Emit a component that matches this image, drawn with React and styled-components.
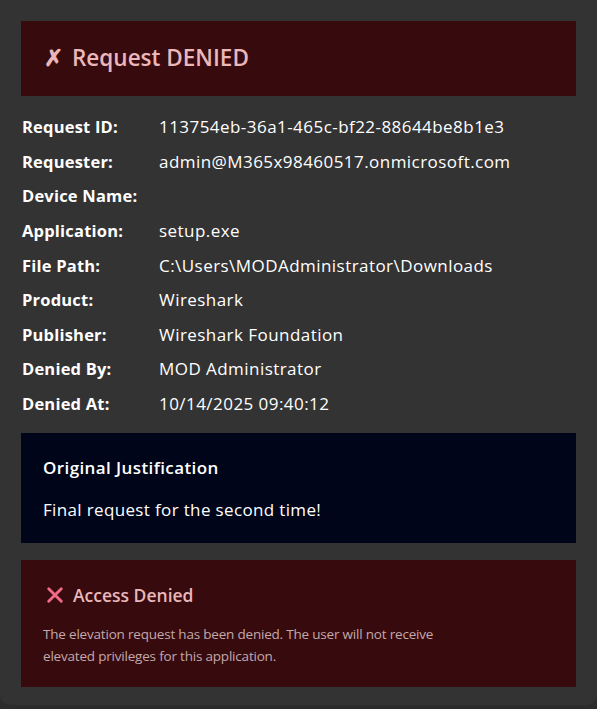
import React from 'react'
import styled, { createGlobalStyle } from 'styled-components'

const Global = createGlobalStyle`
  html, body { margin: 0; padding: 0; background: #2c2c2c; }
  body { font-family: "Open Sans", "Noto Sans", "Liberation Sans", sans-serif; }
`

const Page = styled.div`
  width: 597px;
  height: 705px;
  box-sizing: border-box;
  background: #333333;
  border-radius: 0 0 10px 10px;
  padding: 21px 21px 0 21px;
  display: flex;
  flex-direction: column;
`

const Banner = styled.div`
  background: #370a0e;
  height: 75px;
  box-sizing: border-box;
  padding: 0 23px;
  display: flex;
  align-items: center;
  gap: 9px;
  color: #eab7bb;
  font-size: 22.5px;
  font-weight: 600;
  line-height: 1;
`

const Details = styled.div`
  display: grid;
  grid-template-columns: 137px 1fr;
  grid-auto-rows: 34.6px;
  align-items: center;
  padding: 14px 1px 0;
  margin-bottom: 12px;
  color: #ffffff;
  line-height: 22px;
`

const Label = styled.div`
  font-weight: 700;
  font-size: 16.5px;
  letter-spacing: 0.2px;
`

const Value = styled.div`
  font-weight: 400;
  font-size: 17px;
  letter-spacing: 0.45px;
  white-space: nowrap;
`

const Panel = styled.div`
  background: ${p => p.$bg};
  padding: ${p => p.$pad};
  display: flex;
  flex-direction: column;
  margin-bottom: 17px;
`

const PanelTitle = styled.div`
  color: ${p => p.$color};
  font-size: ${p => p.$size};
  letter-spacing: ${p => p.$ls};
  padding-left: ${p => p.$indent || '0px'};
  font-weight: 600;
  line-height: 22px;
  display: flex;
  align-items: center;
  gap: 9px;
`

const PanelText = styled.div`
  color: ${p => p.$color};
  font-size: ${p => p.$size};
  letter-spacing: ${p => p.$ls};
  line-height: ${p => p.$lh};
  margin-top: ${p => p.$mt};
`

const rows = [
  ['Request ID:', '113754eb-36a1-465c-bf22-88644be8b1e3'],
  ['Requester:', 'admin@M365x98460517.onmicrosoft.com'],
  ['Device Name:', ''],
  ['Application:', 'setup.exe'],
  ['File Path:', 'C:\\Users\\MODAdministrator\\Downloads'],
  ['Product:', 'Wireshark'],
  ['Publisher:', 'Wireshark Foundation'],
  ['Denied By:', 'MOD Administrator'],
  ['Denied At:', '10/14/2025 09:40:12'],
]

const CrossIcon = () => (
  <svg width="18" height="18" viewBox="0 0 20 20">
    <path d="M3 3 L17 17 M17 3 L3 17" stroke="#f06b86" strokeWidth="3.2" strokeLinecap="round" />
  </svg>
)

export default function App() {
  return (
    <>
      <Global />
      <Page>
        <Banner>
          <span>✗</span>
          <span>Request DENIED</span>
        </Banner>
        <Details>
          {rows.map(([k, v]) => (
            <React.Fragment key={k}>
              <Label>{k}</Label>
              <Value>{v}</Value>
            </React.Fragment>
          ))}
        </Details>
        <Panel $bg="#00051a" $pad="24px 22px 22px">
          <PanelTitle $color="#ffffff" $size="17px" $ls="0.4px">Original Justification</PanelTitle>
          <PanelText $color="#ffffff" $size="17px" $ls="0.35px" $lh="22px" $mt="20px">
            Final request for the second time!
          </PanelText>
        </Panel>
        <Panel $bg="#370a0e" $pad="24px 22px 20px">
          <PanelTitle $color="#eab7bb" $size="17.5px" $ls="0px" $indent="3px">
            <CrossIcon />
            <span>Access Denied</span>
          </PanelTitle>
          <PanelText $color="#c2a9aa" $size="13.5px" $ls="-0.2px" $lh="22px" $mt="17px">
            The elevation request has been denied. The user will not receive<br />
            elevated privileges for this application.
          </PanelText>
        </Panel>
      </Page>
    </>
  )
}
